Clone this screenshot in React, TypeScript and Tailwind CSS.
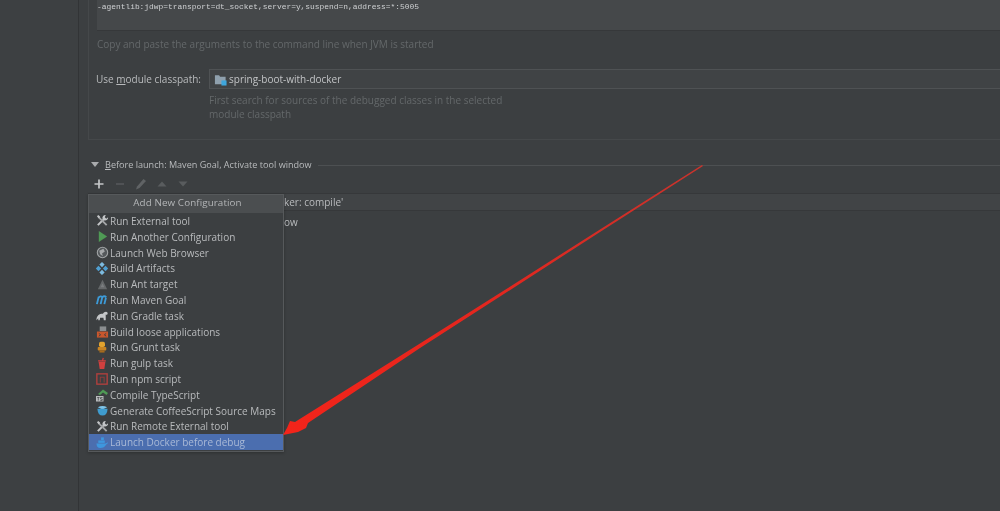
const Wrench = () => (
  <svg viewBox="0 0 14 14" className="w-[13px] h-[13px]">
    <path d="M2 12 L8.5 5.5" stroke="#c4c6c8" strokeWidth="2.2" />
    <path d="M10.5 1 A3.2 3.2 0 0 0 7 5 L9 7 A3.2 3.2 0 0 0 13 3.5 L11 5 L9.5 3.5 Z" fill="#c4c6c8" />
    <path d="M2.5 3 L11.5 12" stroke="#a4a6a8" strokeWidth="2" />
    <path d="M1 2.5 L2.5 1 L4.5 3 L3 4.5 Z" fill="#c4c6c8" />
  </svg>
);

const icons: Record<string, JSX.Element> = {
  play: (
    <svg viewBox="0 0 14 14" className="w-[13px] h-[13px]">
      <path d="M3 1 L12 7 L3 13 Z" fill="#4f9a55" />
    </svg>
  ),
  globe: (
    <svg viewBox="0 0 14 14" className="w-[13px] h-[13px]">
      <circle cx="7" cy="7" r="5.6" fill="#55595c" stroke="#a0a3a5" strokeWidth="1.2" />
      <path d="M3.5 5 L8 3 L9.5 6 L6.5 8 L7.5 11 L4.5 9 Z" fill="#a5a8aa" />
    </svg>
  ),
  artifact: (
    <svg viewBox="0 0 14 14" className="w-[14px] h-[13px]">
      <rect x="5" y="0.8" width="4" height="4" transform="rotate(45 7 2.8)" fill="#7dbbe0" />
      <rect x="1.2" y="5" width="4" height="4" transform="rotate(45 3.2 7)" fill="#4f9fd2" />
      <rect x="8.8" y="5" width="4" height="4" transform="rotate(45 10.8 7)" fill="#4f9fd2" />
      <rect x="5" y="9.2" width="4" height="4" transform="rotate(45 7 11.2)" fill="#7dbbe0" />
    </svg>
  ),
  ant: (
    <svg viewBox="0 0 14 14" className="w-[13px] h-[13px]">
      <path d="M7 2 L12 12 L2 12 Z" fill="#65686a" />
      <path d="M7 6 L9 10 L5 10 Z" fill="#7b7e80" />
    </svg>
  ),
  maven: (
    <svg viewBox="0 0 14 14" className="w-[14px] h-[13px]">
      <path d="M1.5 12 L3.5 4 M5.5 12 L7.3 4.5 M9.5 12 L11.3 5 M3.3 5 Q5.5 2.5 7.3 4.5 Q9.5 2.5 11.6 4.5" fill="none" stroke="#3d9bd8" strokeWidth="2" />
    </svg>
  ),
  gradle: (
    <svg viewBox="0 0 14 14" className="w-[14px] h-[13px]">
      <path d="M1 12 C1 7 4 5 8 5 C9 3 12 2 13 4 C13.5 6 12 6.5 11 6 L11 12 L9 12 L8.5 9.5 L5 9.5 L4.5 12 L3 12 L3 10 Z" fill="#c5c7c9" />
    </svg>
  ),
  loose: (
    <svg viewBox="0 0 14 14" className="w-[13px] h-[14px]">
      <rect x="4" y="1" width="7" height="5" fill="#8b8e90" />
      <rect x="1" y="6.5" width="12" height="6.5" fill="#c9572d" />
      <path d="M3 8.5 L5 10 L3 11.5 M11 8.5 L9 10 L11 11.5" stroke="#3c3f41" strokeWidth="1" fill="none" />
    </svg>
  ),
  grunt: (
    <svg viewBox="0 0 14 14" className="w-[12px] h-[14px]">
      <rect x="3.5" y="1" width="7" height="6" rx="2" fill="#e3a32e" />
      <rect x="2" y="7" width="10" height="4" rx="1" fill="#c98422" />
      <rect x="4" y="11" width="6" height="2.5" fill="#a66b1d" />
    </svg>
  ),
  gulp: (
    <svg viewBox="0 0 14 14" className="w-[12px] h-[15px]">
      <path d="M3 5 L11 5 L9.7 13.5 L4.3 13.5 Z" fill="#d1403f" />
      <path d="M2.5 4 L11.5 4 M7.5 4 L8.5 0.5" stroke="#d1403f" strokeWidth="1.5" />
    </svg>
  ),
  npm: (
    <svg viewBox="0 0 14 14" className="w-[12px] h-[12px]">
      <rect x="1" y="1" width="12" height="12" fill="none" stroke="#b2403e" strokeWidth="1.6" />
      <path d="M5 11 L5 5 L9.5 5 L9.5 11" fill="none" stroke="#8f3d3b" strokeWidth="1.2" />
    </svg>
  ),
  ts: (
    <svg viewBox="0 0 14 14" className="w-[14px] h-[14px]">
      <path d="M3 6 L8 1.5 L13 5 L11.5 7 L8 4.5 L5 7 Z" fill="#4f9a55" />
      <rect x="1" y="8" width="7.5" height="5.5" fill="#b9bbbd" />
      <path d="M2.2 9.5 L4.5 9.5 M3.3 9.5 L3.3 12.5 M7.5 9.5 L5.5 9.5 L5.5 11 L7.2 11 L7.2 12.5 L5.3 12.5" stroke="#3c3f41" strokeWidth="0.7" fill="none" />
    </svg>
  ),
  coffee: (
    <svg viewBox="0 0 14 14" className="w-[13px] h-[13px]">
      <path d="M2 3.5 Q7 1 12 3.5 L7 6 Z" fill="#7fc4e8" />
      <path d="M1.5 5 L12.5 5 Q12 12.5 7 12.5 Q2 12.5 1.5 5 Z" fill="#3f9ccf" />
    </svg>
  ),
  docker: (
    <svg viewBox="0 0 14 14" className="w-[14px] h-[13px]">
      <rect x="6" y="1.5" width="3" height="3" fill="#3e97de" />
      <rect x="3" y="4.8" width="7" height="2.6" fill="#3e97de" />
      <path d="M1 8 L11 8 Q13 7.5 13.5 6.5 Q13.5 8.5 11.5 9.2 Q9.5 13 5 13 Q1.5 13 1 8 Z" fill="#3e97de" />
    </svg>
  ),
};

const items: { label: string; icon: JSX.Element; selected?: boolean }[] = [
  { label: "Run External tool", icon: <Wrench /> },
  { label: "Run Another Configuration", icon: icons.play },
  { label: "Launch Web Browser", icon: icons.globe },
  { label: "Build Artifacts", icon: icons.artifact },
  { label: "Run Ant target", icon: icons.ant },
  { label: "Run Maven Goal", icon: icons.maven },
  { label: "Run Gradle task", icon: icons.gradle },
  { label: "Build loose applications", icon: icons.loose },
  { label: "Run Grunt task", icon: icons.grunt },
  { label: "Run gulp task", icon: icons.gulp },
  { label: "Run npm script", icon: icons.npm },
  { label: "Compile TypeScript", icon: icons.ts },
  { label: "Generate CoffeeScript Source Maps", icon: icons.coffee },
  { label: "Run Remote External tool", icon: <Wrench /> },
  { label: "Launch Docker before debug", icon: icons.docker, selected: true },
];

export default function App() {
  return (
    <div className="relative flex w-[1000px] h-[511px] overflow-hidden bg-[#3c3f41] text-[#b9bbbd] text-[10px] leading-[14px] font-['Open_Sans',sans-serif] blur-[0.35px]">
      <aside className="w-[79px] shrink-0 border-r border-[#323436] bg-[#3d4042]" />
      <main className="flex-1 pl-[9px] min-w-0">
        <section className="h-[140px] border-l border-b border-[#45484a] pl-[8px]">
          <div className="h-[31px] bg-[#45484a] border-b border-[#36383a] text-[7.9px] leading-[14px] text-[#cfd1d3] font-['Liberation_Mono',monospace]">
            -agentlib:jdwp=transport=dt_socket,server=y,suspend=n,address=*:5005
          </div>
          <p className="mt-[6px] text-[#64686a]">Copy and paste the arguments to the command line when JVM is started</p>
          <div className="mt-[18px] flex items-center h-[20px]">
            <label className="w-[112px] shrink-0 -ml-[1px] mr-[1px]">
              Use <span className="underline">m</span>odule classpath:
            </label>
            <div className="flex-1 h-[20px] flex items-center gap-[2px] pl-[4px] bg-[#404345] border border-[#4f5254] border-r-0">
              <svg viewBox="0 0 14 14" className="w-[13px] h-[13px]">
                <path d="M1 2.5 L5.5 2.5 L6.5 4 L12.5 4 L12.5 12 L1 12 Z" fill="#8fa0ad" />
                <rect x="8" y="8" width="5.5" height="5.5" fill="#3ea6dc" />
              </svg>
              <span className="text-[#c2c4c6]">spring-boot-with-docker</span>
            </div>
          </div>
          <p className="mt-[5px] ml-[112px] w-[310px] leading-[13.5px] text-[#64686a]">
            First search for sources of the debugged classes in the selected module classpath
          </p>
        </section>

        <section>
          <div className="mt-[18px] flex items-center h-[14px] pl-[3px]">
            <svg viewBox="0 0 8 6" className="w-[8px] h-[6px] mr-[6px]">
              <path d="M0 0 L8 0 L4 5 Z" fill="#a9abad" />
            </svg>
            <span className="text-[9.1px]">
              <span className="underline">B</span>efore launch: Maven Goal, Activate tool window
            </span>
            <div className="flex-1 h-px bg-[#4d5052] ml-[6px]" />
          </div>
          <div className="mt-[5px] flex items-center h-[14px] pl-[5px] gap-[9px]">
            <svg viewBox="0 0 12 12" className="w-[12px] h-[12px]">
              <path d="M6 1.5 V10.5 M1.5 6 H10.5" stroke="#c4c6c8" strokeWidth="1.7" />
            </svg>
            <svg viewBox="0 0 12 12" className="w-[12px] h-[12px]">
              <path d="M2 6 H10" stroke="#55585a" strokeWidth="1.6" />
            </svg>
            <svg viewBox="0 0 12 12" className="w-[12px] h-[12px]">
              <path d="M1 11.5 L2 8.5 L8.5 1 L11 3 L4.5 10 Z" fill="#606365" />
            </svg>
            <svg viewBox="0 0 12 12" className="w-[12px] h-[12px]">
              <path d="M1.5 8.5 L6 3.5 L10.5 8.5 Z" fill="#595c5e" />
            </svg>
            <svg viewBox="0 0 12 12" className="w-[12px] h-[12px]">
              <path d="M1.5 3.5 L6 8.5 L10.5 3.5 Z" fill="#595c5e" />
            </svg>
          </div>
          <div className="mt-[2px] h-[18px] flex items-center bg-[#414446] border-y border-[#36383a] pl-[196px]">
            ker: compile'
          </div>
          <div className="mt-[3px] h-[16px] flex items-center pl-[196px]">ow</div>
        </section>
      </main>

      <div className="absolute left-[88px] top-[194px] w-[196px] h-[258px] bg-[#3c3f41] border border-[#56595b] shadow-[0_1px_3px_rgba(0,0,0,0.25)]">
        <div className="h-[18px] flex items-center justify-center bg-[#4b4e50] text-[#b4b6b8] text-[9.8px] tracking-[0.1px] pb-[3px] pl-[3px]">
          Add New Configuration
        </div>
        <ul>
          {items.map((it) => (
            <li
              key={it.label}
              className={`flex items-center h-[15.82px] pl-[5px] whitespace-nowrap ${it.selected ? "bg-[#4b6eaf] text-[#a9b9d6]" : ""}`}
            >
              <span className="w-[16px] flex justify-center shrink-0">{it.icon}</span>
              <span>{it.label}</span>
            </li>
          ))}
        </ul>
      </div>

      <svg className="absolute left-0 top-0 pointer-events-none" width="1000" height="511" viewBox="0 0 1000 511">
        <defs>
          <linearGradient id="arrowFill" gradientUnits="userSpaceOnUse" x1="702" y1="165" x2="284" y2="435">
            <stop offset="0" stopColor="#c9332c" />
            <stop offset="0.5" stopColor="#e3261e" />
            <stop offset="1" stopColor="#f3241a" />
          </linearGradient>
        </defs>
        <path
          d="M702 165 L703 166 L600 232 L500 296.5 L420 348 L308 423 L306 428 L298 432 L283 435 L287 428 L290 421 L295 422 L420 343.5 L500 293 L600 229.5 Z"
          fill="url(#arrowFill)"
        />
      </svg>
    </div>
  );
}
